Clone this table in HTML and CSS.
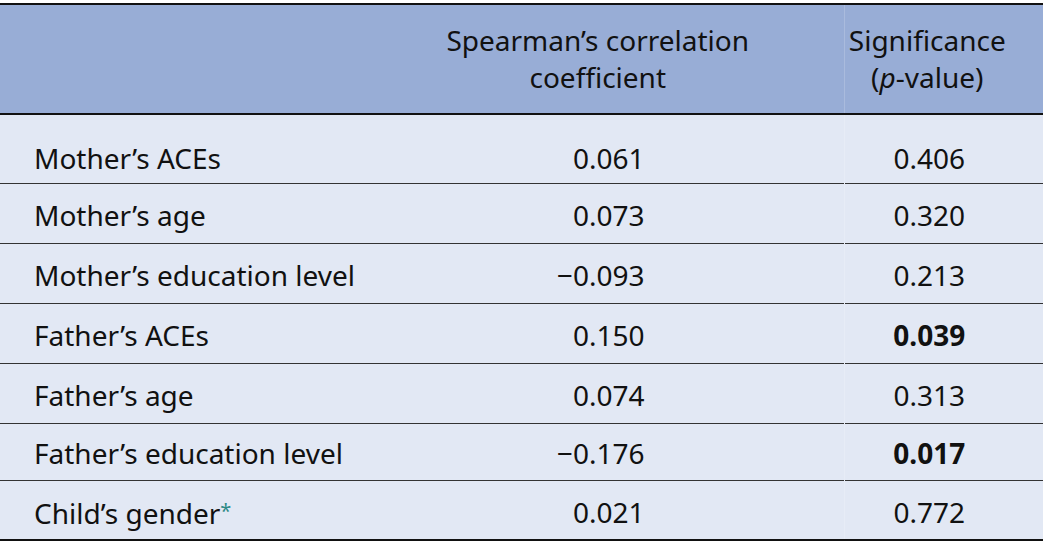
FILE: index.html
```html
<!DOCTYPE html>
<html lang="en">
<head>
<meta charset="utf-8">
<title>Spearman's correlation table</title>
<link rel="stylesheet" href="styles.css">
</head>
<body>
<table class="corr">
  <thead>
    <tr>
      <th class="c-label"></th>
      <th class="c-coef">Spearman’s correlation<br>coefficient</th>
      <th class="c-sig">Significance<br>(<i>p</i>-value)</th>
    </tr>
  </thead>
  <tbody>
    <tr class="first">
      <td class="c-label">Mother’s ACEs</td>
      <td class="c-coef num">0.061</td>
      <td class="c-sig num">0.406</td>
    </tr>
    <tr>
      <td class="c-label">Mother’s age</td>
      <td class="c-coef num">0.073</td>
      <td class="c-sig num">0.320</td>
    </tr>
    <tr>
      <td class="c-label">Mother’s education level</td>
      <td class="c-coef num">−0.093</td>
      <td class="c-sig num">0.213</td>
    </tr>
    <tr>
      <td class="c-label">Father’s ACEs</td>
      <td class="c-coef num">0.150</td>
      <td class="c-sig num"><b>0.039</b></td>
    </tr>
    <tr>
      <td class="c-label">Father’s age</td>
      <td class="c-coef num">0.074</td>
      <td class="c-sig num">0.313</td>
    </tr>
    <tr class="short">
      <td class="c-label">Father’s education level</td>
      <td class="c-coef num">−0.176</td>
      <td class="c-sig num"><b>0.017</b></td>
    </tr>
    <tr class="last">
      <td class="c-label">Child’s gender<span class="fn">*</span></td>
      <td class="c-coef num">0.021</td>
      <td class="c-sig num">0.772</td>
    </tr>
  </tbody>
</table>
</body>
</html>
```

FILE: styles.css
```css
html, body {
  margin: 0;
  padding: 0;
  background: #ffffff;
}

body {
  padding-top: 3px;
  font-family: "Noto Sans", "DejaVu Sans", sans-serif;
  font-size: 28px;
  color: #111111;
}

.corr {
  width: 1043px;
  border-collapse: collapse;
  table-layout: fixed;
  border-top: 2px solid #111;
  border-bottom: 2px solid #111;
}

.corr th,
.corr td {
  box-sizing: border-box;
  white-space: nowrap;
}

.corr thead tr {
  background: #98add6;
  height: 110px;
  border-bottom: 2px solid #111;
}

.corr th {
  font-weight: normal;
  line-height: 37px;
  text-align: center;
  vertical-align: middle;
  padding: 0;
}

.corr tbody tr {
  background: #e2e8f4;
  height: 60px;
  border-top: 1px solid #333;
}

.corr tbody tr.first {
  height: 69px;
}

.corr tbody tr.short {
  height: 57px;
}

.corr td {
  padding: 4px 0 0 0;
  vertical-align: middle;
  line-height: 36px;
}

.corr tbody tr.first td {
  padding-top: 18px;
}

.corr tbody tr.short td {
  padding-top: 2px;
}

.c-label {
  width: 352px;
  text-align: left;
}

td.c-label {
  padding-left: 34px;
}

.c-coef {
  width: 492px;
}

td.c-coef {
  text-align: right;
  padding-right: 199px;
}

.c-sig {
  width: 199px;
  border-left: 1px solid rgba(255, 255, 255, 0.18);
}

.corr th.c-sig {
  padding-right: 33px;
}

td.c-sig {
  text-align: center;
  padding-right: 29px;
}

.fn {
  color: #2e8a86;
  font-size: 20px;
  vertical-align: 6px;
}

b {
  font-weight: bold;
}
```
